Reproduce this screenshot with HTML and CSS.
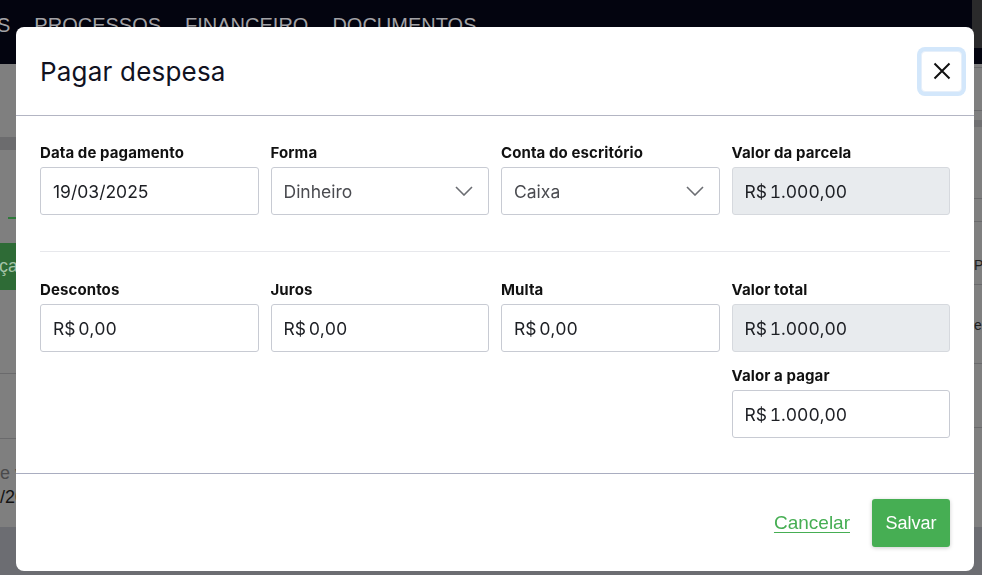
FILE: index.html
```html
<!DOCTYPE html>
<html lang="pt-BR">
<head>
<meta charset="utf-8">
<title>Pagar despesa</title>
<link rel="stylesheet" href="styles.css">
</head>
<body>
<div class="page">
  <header class="nav">
    <span class="nav-item first">S</span>
    <span class="nav-item">PROCESSOS</span>
    <span class="nav-item">FINANCEIRO</span>
    <span class="nav-item">DOCUMENTOS</span>
    <span class="nav-corner"></span>
  </header>
  <div class="content">
    <div class="bg-left">
      <div class="bg-band"></div>
      <div class="bg-tab"></div>
      <div class="bg-btn">ça</div>
      <div class="bg-line l1"></div>
      <div class="bg-line l2"></div>
      <div class="bg-text t1">e v</div>
      <div class="bg-text t2">/20</div>
    </div>
    <div class="bg-right">
      <div class="bg-line r1"></div>
      <div class="bg-line r2"></div>
      <div class="bg-band2"></div>
      <div class="bg-line r3"></div>
      <div class="bg-line r4"></div>
      <div class="bg-text small r5">Pe</div>
      <div class="bg-line r6"></div>
      <div class="bg-text small r7">er</div>
      <div class="bg-line r8"></div>
      <div class="bg-line r9"></div>
    </div>
  </div>
  <div class="bg-bottom"></div>
</div>

<div class="modal" role="dialog" aria-labelledby="modal-title">
  <div class="modal-header">
    <h2 id="modal-title" class="modal-title">Pagar despesa</h2>
    <button class="close-btn" aria-label="Fechar">
      <svg width="18" height="18" viewBox="0 0 18 18"><path d="M1.5 1.5 L16.5 16.5 M16.5 1.5 L1.5 16.5" stroke="#111" stroke-width="2" fill="none"/></svg>
    </button>
  </div>
  <div class="modal-body">
    <div class="grid">
      <div class="field">
        <label class="label">Data de pagamento</label>
        <div class="control date">19/03/2025</div>
      </div>
      <div class="field">
        <label class="label">Forma</label>
        <div class="control select"><span>Dinheiro</span>
          <svg width="18" height="10" viewBox="0 0 18 10"><polyline points="1,1 9,9 17,1" stroke="#6b6d72" stroke-width="1.6" fill="none"/></svg>
        </div>
      </div>
      <div class="field">
        <label class="label">Conta do escritório</label>
        <div class="control select"><span>Caixa</span>
          <svg width="18" height="10" viewBox="0 0 18 10"><polyline points="1,1 9,9 17,1" stroke="#6b6d72" stroke-width="1.6" fill="none"/></svg>
        </div>
      </div>
      <div class="field">
        <label class="label">Valor da parcela</label>
        <div class="control disabled">R$ 1.000,00</div>
      </div>
    </div>
    <div class="separator"></div>
    <div class="grid">
      <div class="field">
        <label class="label">Descontos</label>
        <div class="control">R$ 0,00</div>
      </div>
      <div class="field">
        <label class="label">Juros</label>
        <div class="control">R$ 0,00</div>
      </div>
      <div class="field">
        <label class="label">Multa</label>
        <div class="control">R$ 0,00</div>
      </div>
      <div class="field">
        <label class="label">Valor total</label>
        <div class="control disabled">R$ 1.000,00</div>
      </div>
      <div class="field col4">
        <label class="label">Valor a pagar</label>
        <div class="control">R$ 1.000,00</div>
      </div>
    </div>
  </div>
  <div class="modal-footer">
    <a class="cancel" href="#">Cancelar</a>
    <button class="save">Salvar</button>
  </div>
</div>
</body>
</html>
```

FILE: styles.css
```css
* { box-sizing: border-box; }
html, body { margin: 0; padding: 0; }
body {
  width: 982px;
  height: 575px;
  overflow: hidden;
  background: #7f7f7f;
  font-family: Inter, "Noto Sans", sans-serif;
}
.page { display: flex; flex-direction: column; height: 575px; }

.nav {
  height: 64px;
  flex: none;
  background: #03040f;
  display: flex;
  align-items: flex-start;
  gap: 24px;
  padding-top: 13px;
  font-family: "Liberation Sans", Arial, sans-serif;
  font-size: 20px;
  line-height: 24px;
  color: #a2a2a6;
}
.nav-item.first { margin-left: -3px; }
.nav-corner {
  margin-left: auto;
  margin-top: -13px;
  width: 10px;
  height: 48px;
  background: #2a2a2b;
}

.content {
  flex: 1;
  display: flex;
  justify-content: space-between;
}
.bg-left { width: 120px; display: flex; flex-direction: column; }
.bg-right { width: 8px; display: flex; flex-direction: column; overflow: hidden; }

.bg-band { margin-top: 73px; height: 13px; background: #6c6c6e; }
.bg-tab { margin-top: 67px; margin-left: 8px; height: 2px; width: 60px; background: #2e7a3a; }
.bg-btn {
  margin-top: 24px;
  height: 47px;
  background: #2e6b36;
  color: #a5c3a8;
  font-family: "Liberation Sans", Arial, sans-serif;
  font-size: 18px;
  line-height: 47px;
  margin-left: -1px;
}
.bg-line { height: 1px; background: #6a6a6c; }
.l1 { margin-top: 83px; }
.l2 { margin-top: 64px; }
.bg-text {
  font-family: "Liberation Sans", Arial, sans-serif;
  font-size: 18px;
  line-height: 20px;
  white-space: nowrap;
}
.bg-text.small { font-size: 14px; }
.t1 { margin-top: 24px; color: #4a4a4c; }
.t2 { margin-top: 4px; color: #121212; }
.bg-bottom { flex: none; height: 48px; background: #6c6d72; }

.r1 { margin-top: 3px; }
.r2 { margin-top: 42px; }
.bg-band2 { margin-top: 9px; height: 7px; background: #707072; }
.r3 { margin-top: 71px; }
.r4 { margin-top: 22px; }
.r5 { margin-top: 33px; color: #1e1e1e; }
.r6 { margin-top: 9px; }
.r7 { margin-top: 30px; color: #1e1e1e; }
.r8 { margin-top: 28px; }
.r9 { margin-top: 63px; }

/* Modal */
.modal {
  position: fixed;
  left: 16px;
  top: 27px;
  width: 958px;
  background: #fff;
  border-radius: 8px;
  display: flex;
  flex-direction: column;
  color: #111;
}
.modal-header {
  height: 89px;
  border-bottom: 1px solid #b3b5c3;
  display: flex;
  align-items: center;
  justify-content: space-between;
  padding: 0 12px 0 24px;
}
.modal-title {
  margin: 0;
  font-size: 26px;
  font-weight: 400;
  color: #11121f;
  letter-spacing: 0.2px;
}
.close-btn {
  width: 41px;
  height: 41px;
  border: 1px solid #e6effa;
  border-radius: 4px;
  background: #fff;
  box-shadow: 0 0 0 4px #d3e7fb;
  display: flex;
  align-items: center;
  justify-content: center;
  padding: 0;
}

.modal-body { padding: 27px 24px 35px; }
.grid {
  display: grid;
  grid-template-columns: repeat(4, 1fr);
  column-gap: 12px;
  row-gap: 14px;
}
.col4 { grid-column: 4; }
.field { display: flex; flex-direction: column; }
.label {
  font-size: 15px;
  line-height: 20px;
  font-weight: 700;
  color: #111;
  margin-bottom: 4px;
  letter-spacing: 0.1px;
}
.control {
  height: 48px;
  border: 1px solid #c8cbd3;
  border-radius: 3px;
  padding: 0 12px;
  display: flex;
  align-items: center;
  font-size: 17.5px;
  word-spacing: -2px;
  font-variant-numeric: tabular-nums;
  color: #1d1f24;
}
.control.date { font-variant-numeric: normal; }
.control.select {
  justify-content: space-between;
  color: #4a4b50;
  padding-right: 15px;
  font-variant-numeric: normal;
}
.control.disabled {
  background: #e8ebee;
  border-color: #d6d9de;
}
.separator {
  margin: 36px 0 28px;
  height: 1px;
  background: #e7e8ec;
}

.modal-footer {
  border-top: 1px solid #a9adc0;
  padding: 25px 24px 24px;
  display: flex;
  justify-content: flex-end;
  align-items: center;
  gap: 22px;
}
.cancel {
  font-family: "Liberation Sans", Arial, sans-serif;
  font-size: 19px;
  color: #46ae53;
  text-decoration: underline;
  text-underline-offset: 3px;
}
.save {
  height: 48px;
  width: 78px;
  border: none;
  border-radius: 3px;
  background: #46ae53;
  color: #fff;
  font-family: "Liberation Sans", Arial, sans-serif;
  font-size: 18px;
  box-shadow: 0 1px 4px rgba(0,0,0,0.2);
  padding: 0;
}
```
